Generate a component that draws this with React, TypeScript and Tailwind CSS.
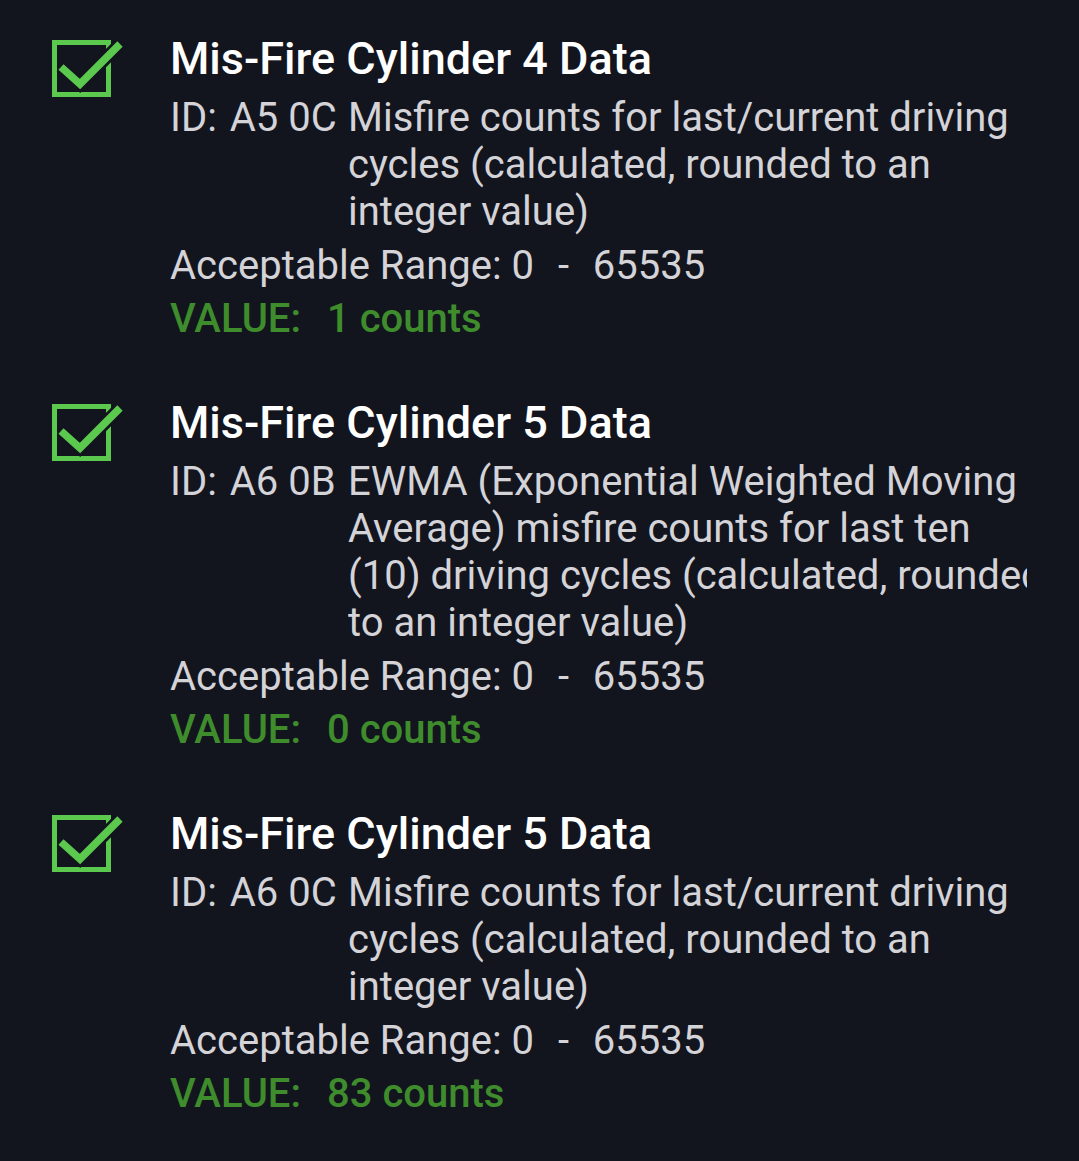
import React from 'react'

type Item = {
  title: string
  id: string
  lines: string[]
  value: string
}

const items: Item[] = [
  {
    title: 'Mis-Fire Cylinder 4 Data',
    id: 'A5 0C',
    lines: ['Misfire counts for last/current driving', 'cycles (calculated, rounded to an', 'integer value)'],
    value: '1 counts',
  },
  {
    title: 'Mis-Fire Cylinder 5 Data',
    id: 'A6 0B',
    lines: [
      'EWMA (Exponential Weighted Moving',
      'Average) misfire counts for last ten',
      '(10) driving cycles (calculated, rounded',
      'to an integer value)',
    ],
    value: '0 counts',
  },
  {
    title: 'Mis-Fire Cylinder 5 Data',
    id: 'A6 0C',
    lines: ['Misfire counts for last/current driving', 'cycles (calculated, rounded to an', 'integer value)'],
    value: '83 counts',
  },
]

function CheckBox() {
  return (
    <svg width="76" height="66" viewBox="0 0 76 66">
      <rect x="6.5" y="6.5" width="54" height="52" fill="none" stroke="#5bc94e" strokeWidth="5" />
      <polyline points="13,31 32,48 72,8" fill="none" stroke="#13151e" strokeWidth="13" />
      <polyline points="13,31 32,48 72,8" fill="none" stroke="#5bc94e" strokeWidth="7.5" />
    </svg>
  )
}

function Row({ item }: { item: Item }) {
  return (
    <div className="flex">
      <div className="w-[170px] shrink-0 pl-[48px] pt-[3px]">
        <CheckBox />
      </div>
      <div className="flex-1 min-w-0">
        <div className="text-[45px] leading-[52px] font-medium text-white">{item.title}</div>
        <div className="mt-[9px] flex text-[40px] leading-[47px] text-[#d3d3d8]">
          <div className="w-[178px] shrink-0 whitespace-pre">
            ID: <span className="ml-[3px]">{item.id}</span>
          </div>
          {/* long lines get clipped at the right edge, like the app does */}
          <div className="w-[679px] overflow-hidden">
            {item.lines.map((l, i) => (
              <div key={i} className="whitespace-nowrap">{l}</div>
            ))}
          </div>
        </div>
        <div className="mt-[4px] text-[40px] leading-[53px] text-[#d3d3d8] whitespace-pre">
          Acceptable Range: 0<span className="mx-[4px]">{'  -  '}</span>65535
        </div>
        <div className="text-[40px] leading-[53px] font-medium text-[#3e8c2c] whitespace-pre">
          VALUE:<span className="ml-[26px]">{item.value}</span>
        </div>
      </div>
    </div>
  )
}

export default function App() {
  return (
    <div
      className="min-h-screen w-full bg-[#13151e] pt-[33px] flex flex-col gap-[52px]"
      style={{ fontFamily: 'Roboto, "Noto Sans", sans-serif' }}
    >
      {items.map((item, i) => (
        <Row key={i} item={item} />
      ))}
    </div>
  )
}
